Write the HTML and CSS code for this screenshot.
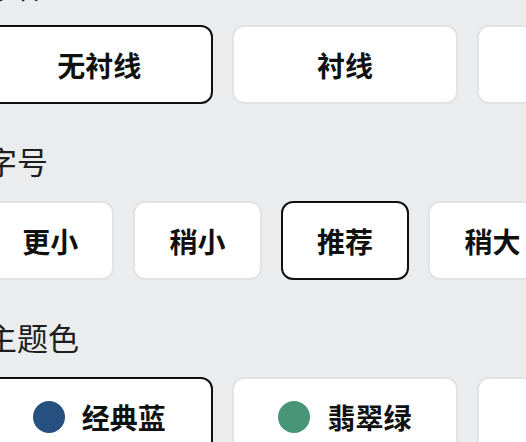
FILE: index.html
```html
<!DOCTYPE html>
<html lang="zh-CN">
<head>
<meta charset="utf-8">
<title>设置</title>
<link rel="stylesheet" href="styles.css">
</head>
<body>
<div class="settings">
  <section class="group">
    <div class="label">字体</div>
    <div class="options cols-3">
      <button class="opt selected">无衬线</button>
      <button class="opt">衬线</button>
      <button class="opt">等宽</button>
    </div>
  </section>
  <section class="group">
    <div class="label">字号</div>
    <div class="options cols-5">
      <button class="opt">更小</button>
      <button class="opt">稍小</button>
      <button class="opt selected">推荐</button>
      <button class="opt">稍大</button>
      <button class="opt">更大</button>
    </div>
  </section>
  <section class="group">
    <div class="label">主题色</div>
    <div class="options cols-3">
      <button class="opt selected"><span class="dot dot-blue"></span>经典蓝</button>
      <button class="opt"><span class="dot dot-green"></span>翡翠绿</button>
      <button class="opt"><span class="dot dot-orange"></span>暖橙</button>
    </div>
  </section>
</div>
</body>
</html>
```

FILE: styles.css
```css
html, body {
  margin: 0;
  padding: 0;
  overflow: hidden;
  background: #ebecee;
}

body {
  width: 526px;
  height: 442px;
  font-family: "Noto Sans CJK SC", "Noto Sans", sans-serif;
  color: #1c1c1e;
}

.settings {
  width: 718px;
  margin-left: -14px;
  margin-top: -35px;
  display: flex;
  flex-direction: column;
  gap: 37px;
}

.group {
  display: flex;
  flex-direction: column;
  gap: 20px;
}

.label {
  height: 40px;
  line-height: 40px;
  font-size: 31px;
  font-weight: 400;
  color: #1e1e20;
}

.options {
  display: grid;
  gap: 19px;
}

.cols-3 {
  grid-template-columns: repeat(3, 1fr);
}

.cols-5 {
  grid-template-columns: repeat(5, 1fr);
}

.opt {
  box-sizing: border-box;
  height: 79px;
  border: 2px solid #e3e3e6;
  border-radius: 12px;
  background: #ffffff;
  font-family: "Noto Sans CJK SC", "Noto Sans", sans-serif;
  font-size: 28px;
  font-weight: 700;
  color: #111111;
  display: flex;
  align-items: center;
  justify-content: center;
  gap: 17px;
  padding: 0;
}

.opt.selected {
  border-color: #111111;
}

.dot {
  width: 32px;
  height: 32px;
  border-radius: 50%;
  flex: none;
}

.dot-blue {
  background: #26507f;
}

.dot-green {
  background: #489677;
}

.dot-orange {
  background: #d9822b;
}
```
